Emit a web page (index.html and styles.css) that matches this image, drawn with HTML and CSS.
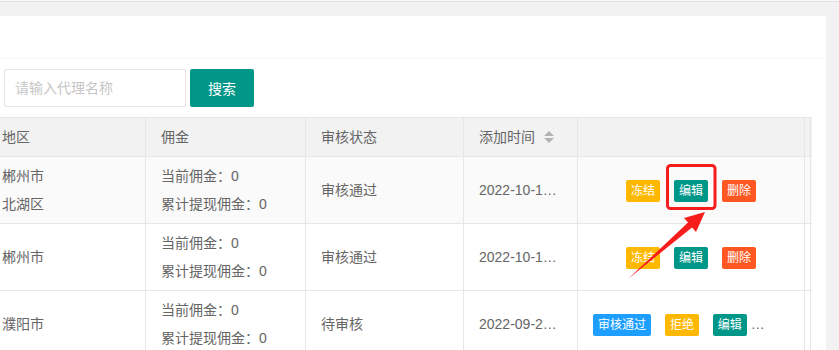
FILE: index.html
```html
<!DOCTYPE html>
<html lang="zh-CN">
<head>
  <meta charset="UTF-8" />
  <title>代理列表</title>
  <link rel="stylesheet" href="styles.css">
</head>
<body>
  <div class="topbar"><span class="tab"></span></div>

  <div class="layout">
    <div class="card">
      <div class="card-header"></div>
      <div class="card-body">
        <form class="search">
          <input type="text" class="search-input" placeholder="请输入代理名称" />
          <button type="button" class="btn">搜索</button>
        </form>

        <div class="table-view">
          <div class="tr thead">
            <div class="td"><div class="cell">地区</div></div>
            <div class="td"><div class="cell">佣金</div></div>
            <div class="td"><div class="cell">审核状态</div></div>
            <div class="td"><div class="cell">添加时间 <span class="sort"><svg width="10" height="12" viewBox="0 0 10 12"><polygon points="0,5 5,0 10,5" /><polygon points="0,7 10,7 5,12" /></svg></span></div></div>
            <div class="td"><div class="cell"></div></div>
            <div class="td patch"></div>
          </div>

          <div class="tr hover">
            <div class="td"><div class="cell">郴州市<br>北湖区</div></div>
            <div class="td"><div class="cell">当前佣金：0<br>累计提现佣金：0</div></div>
            <div class="td"><div class="cell">审核通过</div></div>
            <div class="td"><div class="cell">2022-10-18 15:32:06</div></div>
            <div class="td"><div class="cell actions">
              <a class="btn-xs warm">冻结</a>
              <a class="btn-xs">编辑</a>
              <a class="btn-xs danger">删除</a>
            </div></div>
            <div class="td patch"></div>
          </div>

          <div class="tr">
            <div class="td"><div class="cell">郴州市</div></div>
            <div class="td"><div class="cell">当前佣金：0<br>累计提现佣金：0</div></div>
            <div class="td"><div class="cell">审核通过</div></div>
            <div class="td"><div class="cell">2022-10-17 09:14:51</div></div>
            <div class="td"><div class="cell actions">
              <a class="btn-xs warm">冻结</a>
              <a class="btn-xs">编辑</a>
              <a class="btn-xs danger">删除</a>
            </div></div>
            <div class="td patch"></div>
          </div>

          <div class="tr">
            <div class="td"><div class="cell">濮阳市</div></div>
            <div class="td"><div class="cell">当前佣金：0<br>累计提现佣金：0</div></div>
            <div class="td"><div class="cell">待审核</div></div>
            <div class="td"><div class="cell">2022-09-26 11:40:18</div></div>
            <div class="td"><div class="cell actions">
              <a class="btn-xs normal">审核通过</a>
              <a class="btn-xs warm">拒绝</a>
              <a class="btn-xs">编辑</a>
              <a class="btn-xs danger">删除</a>
            </div></div>
            <div class="td patch"></div>
          </div>
        </div>
      </div>
    </div>
  </div>

  <!-- annotation drawn over the screenshot -->
  <svg class="mark" width="839" height="350" viewBox="0 0 839 350">
    <rect x="667.5" y="165.5" width="47.5" height="43" rx="3" />
    <polygon points="628,279 688,222.5 684,218 705,212 696,232 692,227.5" />
  </svg>
</body>
</html>
```

FILE: styles.css
```css
body {
  margin: 0;
  font-family: "Liberation Sans", "Noto Sans CJK SC", sans-serif;
  font-size: 14px;
  color: #666;
  background-color: #f2f2f2;
  height: 350px;
  overflow: hidden;
  position: relative;
}

.topbar {
  height: 1px;
  background-color: #fafafa;
  border-bottom: 1px solid #e2e2e2;
  display: flex;
  justify-content: flex-end;
}

.tab {
  width: 39px;
  height: 1px;
  border-left: 1px solid #e2e2e2;
  border-right: 1px solid #e2e2e2;
  margin-right: 20px;
}

.layout {
  display: flex;
  padding: 14px 13px 0 0;
}

.card {
  flex: 1;
  background-color: #fff;
  border-radius: 0 2px 0 0;
  overflow: hidden;
  height: 400px;
}

.card-header {
  height: 42px;
  border-bottom: 1px solid #f6f6f6;
}

.card-body {
  padding: 10px 15px 0 4px;
}

.search {
  display: flex;
  gap: 4px;
  margin: 0;
}

.search-input {
  width: 182px;
  height: 38px;
  box-sizing: border-box;
  border: 1px solid #e6e6e6;
  border-radius: 2px;
  padding: 0 10px;
  font-family: inherit;
  font-size: 14px;
  color: #333;
  outline: none;
}

.search-input::placeholder {
  color: #c6c6c6;
}

.btn {
  height: 38px;
  padding: 0 18px;
  border: none;
  border-radius: 2px;
  background-color: #009688;
  color: #fff;
  font-family: inherit;
  font-size: 14px;
  cursor: pointer;
}

.table-view {
  margin: 10px 0 0 -18px;
  width: 825px;
  border-top: 1px solid #e6e6e6;
  border-left: 1px solid #e6e6e6;
}

.tr {
  display: grid;
  grid-template-columns: 159px 160px 158px 114px 227px 6px;
  border-bottom: 1px solid #e6e6e6;
}

.thead {
  background-color: #f2f2f2;
}

.tr.hover {
  background-color: #fafafa;
}

.td {
  box-sizing: border-box;
  border-right: 1px solid #e6e6e6;
  padding: 5px 0;
  display: flex;
  align-items: center;
  min-width: 0;
}

.cell {
  flex: 1;
  min-width: 0;
  padding: 0 15px;
  line-height: 28px;
  white-space: nowrap;
  overflow: hidden;
  text-overflow: ellipsis;
}

.sort {
  display: inline-block;
  margin-left: 5px;
  vertical-align: middle;
  line-height: 0;
  position: relative;
  top: -1px;
}

.sort svg {
  fill: #b2b2b2;
}

.actions {
  text-align: center;
}

.btn-xs {
  display: inline-block;
  height: 22px;
  line-height: 22px;
  padding: 0 5px;
  font-size: 12px;
  color: #fff;
  background-color: #009688;
  border-radius: 2px;
  vertical-align: middle;
}

.btn-xs + .btn-xs {
  margin-left: 10px;
}

.btn-xs.warm {
  background-color: #ffb800;
}

.btn-xs.danger {
  background-color: #ff5722;
}

.btn-xs.normal {
  background-color: #1e9fff;
}

.mark {
  position: absolute;
  top: 0;
  left: 0;
  pointer-events: none;
}

.mark rect {
  fill: none;
  stroke: #f81d1d;
  stroke-width: 3;
}

.mark polygon {
  fill: #f81d1d;
}
```
